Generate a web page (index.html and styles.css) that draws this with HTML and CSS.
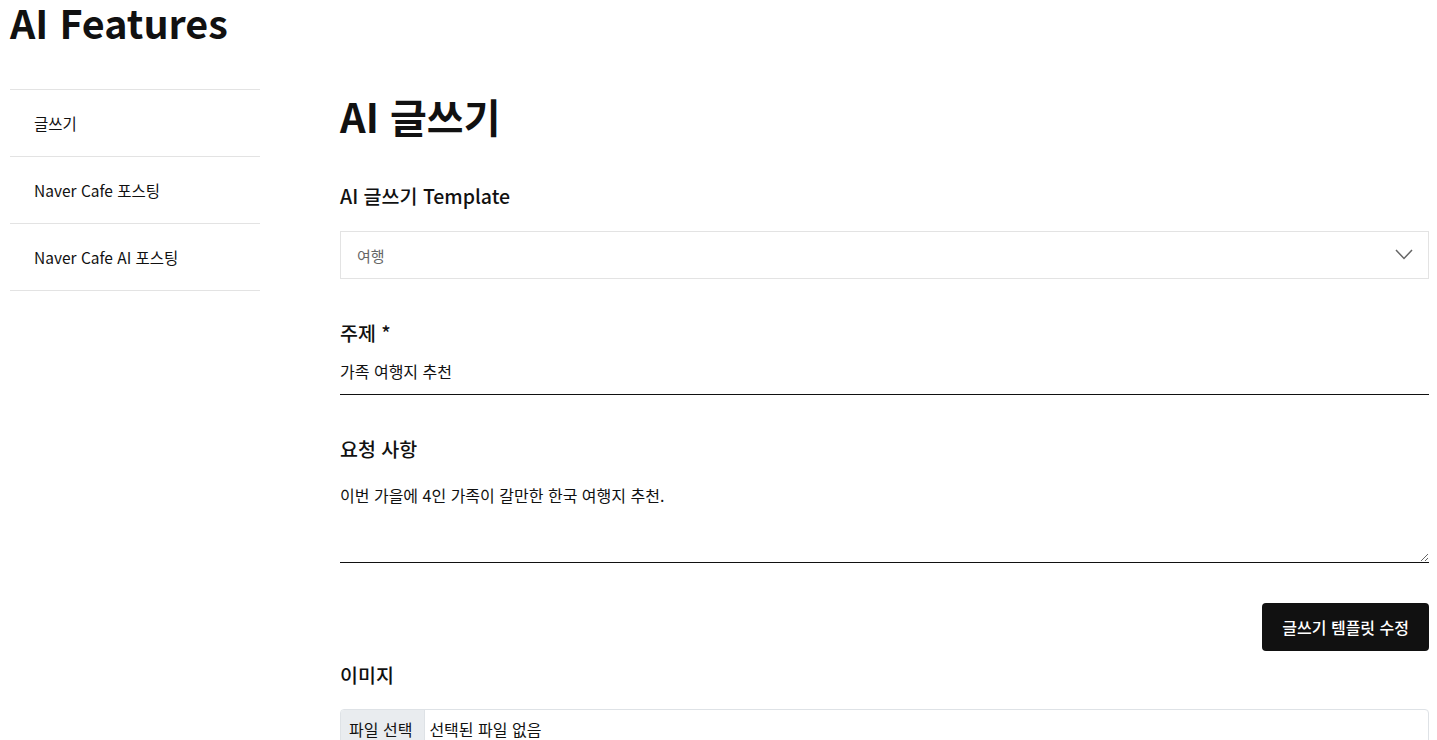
FILE: index.html
```html
<!DOCTYPE html>
<html lang="ko">
<head>
  <meta charset="UTF-8" />
  <meta name="viewport" content="width=device-width, initial-scale=1.0" />
  <title>AI Features</title>
  <link rel="stylesheet" href="styles.css">
</head>
<body>
  <h1 class="page-title">AI Features</h1>
  <div class="layout">
    <nav class="side-menu">
      <a href="#">글쓰기</a>
      <a href="#">Naver Cafe 포스팅</a>
      <a href="#">Naver Cafe AI 포스팅</a>
    </nav>
    <main class="content">
      <h2 class="content-title">AI 글쓰기</h2>
      <form class="writer-form">
        <label class="field-label label-template" for="template">AI 글쓰기 Template</label>
        <div class="select-wrap">
          <select id="template" class="select-box">
            <option>여행</option>
          </select>
          <svg class="select-arrow" width="18" height="11" viewBox="0 0 18 11">
            <path d="M1 1 L9 9.5 L17 1" fill="none" stroke="#666" stroke-width="1.5" />
          </svg>
        </div>

        <label class="field-label label-subject" for="subject">주제 *</label>
        <input id="subject" class="line-input" value="가족 여행지 추천" />

        <label class="field-label label-request" for="request">요청 사항</label>
        <textarea id="request" class="line-textarea">이번 가을에 4인 가족이 갈만한 한국 여행지 추천.</textarea>

        <div class="form-actions">
          <button type="button" class="btn-dark">글쓰기 템플릿 수정</button>
        </div>

        <label class="field-label label-image">이미지</label>
        <div class="file-box">
          <span class="file-button">파일 선택</span>
          <span class="file-name">선택된 파일 없음</span>
        </div>
      </form>
    </main>
  </div>
</body>
</html>
```

FILE: styles.css
```css
body {
  margin: 0;
  padding: 0 8px 0 10px;
  font-family: "Noto Sans CJK KR", "Noto Sans", sans-serif;
  color: #111;
  background: #fff;
}
.page-title {
  margin: 0;
  font-size: 39.5px;
  line-height: 44px;
  font-weight: 700;
}
.layout {
  display: flex;
  gap: 80px;
  margin-top: 45px;
}
.side-menu {
  width: 250px;
  flex-shrink: 0;
  display: flex;
  flex-direction: column;
  border-top: 1px solid #e3e3e3;
}
.side-menu a {
  display: flex;
  align-items: center;
  height: 66px;
  padding-left: 24px;
  border-bottom: 1px solid #e3e3e3;
  font-size: 15.5px;
  color: #111;
  text-decoration: none;
}
.content {
  flex: 1;
}
.content-title {
  margin: 5px 0 0;
  font-size: 40px;
  line-height: 44px;
  font-weight: 700;
}
.writer-form {
  display: flex;
  flex-direction: column;
}
.field-label {
  display: block;
  font-size: 19.5px;
  line-height: 28px;
  font-weight: 500;
}
.label-template {
  margin-top: 44px;
}
.label-subject {
  margin-top: 40px;
}
.label-request {
  margin-top: 40px;
}
.label-image {
  margin-top: 10px;
}
.select-wrap {
  position: relative;
  margin-top: 21px;
}
.select-box {
  width: 100%;
  height: 48px;
  padding: 0 16px;
  border: 1px solid #e3e3e3;
  border-radius: 0;
  background: #fff;
  appearance: none;
  font-family: inherit;
  font-size: 15px;
  color: #666;
  outline: none;
}
.select-arrow {
  position: absolute;
  right: 16px;
  top: 18px;
  pointer-events: none;
}
.line-input,
.line-textarea {
  width: 100%;
  box-sizing: border-box;
  border: none;
  border-bottom: 1px solid #111;
  padding: 8px 0 11px;
  font-family: inherit;
  font-size: 16px;
  line-height: 24px;
  color: #111;
  outline: none;
  background: transparent;
}
.line-input {
  margin-top: 4px;
}
.line-textarea {
  margin-top: 11px;
  height: 89px;
  padding: 9px 0 0;
  resize: vertical;
}
.form-actions {
  display: flex;
  justify-content: flex-end;
  margin-top: 40px;
}
.btn-dark {
  height: 48px;
  padding: 0 20px;
  border: none;
  border-radius: 4px;
  background: #111;
  color: #fff;
  font-family: inherit;
  font-size: 16px;
  font-weight: 500;
  cursor: pointer;
}
.file-box {
  display: flex;
  align-items: stretch;
  margin-top: 20px;
  height: 38px;
  border: 1px solid #dee2e6;
  border-radius: 4px;
  overflow: hidden;
  font-size: 16px;
}
.file-button {
  display: flex;
  align-items: center;
  padding: 0 12px 0 8px;
  background: #e9ecef;
  border-right: 1px solid #dee2e6;
}
.file-name {
  display: flex;
  align-items: center;
  padding-left: 4px;
}
```
